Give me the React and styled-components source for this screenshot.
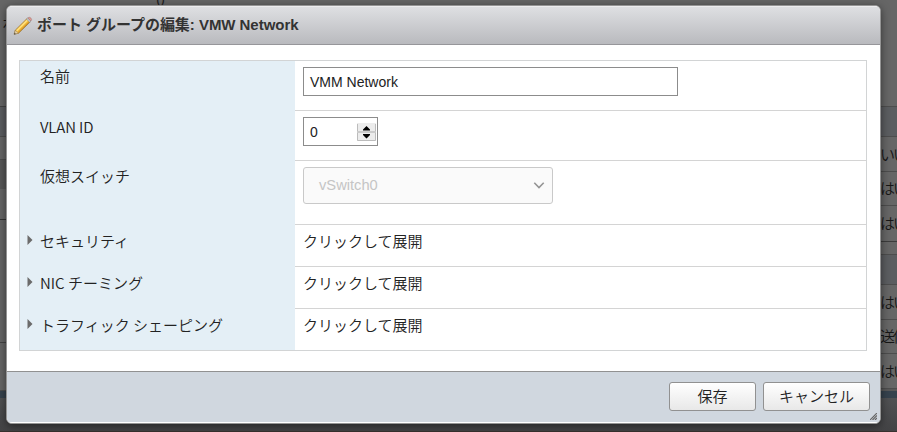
import React from "react";
import styled, { createGlobalStyle, css } from "styled-components";

const Global = createGlobalStyle`
  *, *::before, *::after { box-sizing: border-box; }
  body {
    margin: 0;
    overflow: hidden;
    color: #222;
    font: 350 15px/20px "Noto Sans CJK JP DemiLight", "Noto Sans CJK JP", sans-serif;
  }
`;

const Page = styled.div`
  position: relative;
  height: 432px;
  overflow: hidden;
  background: linear-gradient(#666 398px, #505153 398px, #434345 431px, #38322f 431px);
`;

const Backdrop = styled.div`
  display: flex;
  justify-content: space-between;
  height: 432px;
  color: #161616;
`;

const Strip = styled.div`
  width: ${(p) => p.$width}px;
  overflow: hidden;
`;

const fills = {
  plain: "#666",
  heading: "#5b5d60",
  dark: "#585858",
  blue: "#36424d",
};

const Band = styled.div`
  height: ${(p) => p.$height}px;
  line-height: ${(p) => p.$height - 2}px;
  letter-spacing: -2px;
  white-space: nowrap;
  background: ${(p) => fills[p.$fill || "plain"]};
  border-bottom: ${(p) => p.$rule || 0}px solid ${(p) => p.$ruleColor || "#4d4d4d"};
`;

const Lead = styled.div`
  height: 107px;
  padding: 13px 0 0 2px;
  border-bottom: 1px solid #444;
`;

const Caption = styled.span`
  position: absolute;
  top: -10px;
  left: 156px;
  font: 15px/17px "Liberation Sans", sans-serif;
  letter-spacing: -1px;
  color: #222;
`;

const Dialog = styled.section`
  position: absolute;
  top: 5px;
  left: 6px;
  width: 875px;
  height: 419px;
  display: flex;
  flex-direction: column;
  overflow: hidden;
  background: #fff;
  border: 1px solid #949494;
  border-radius: 6px;
  box-shadow: 0 2px 8px rgba(0, 0, 0, 0.5);
`;

const Header = styled.header`
  display: flex;
  align-items: center;
  gap: 4px;
  height: 39px;
  flex: none;
  padding: 0 0 0 6px;
  border-top: 1px solid #ececee;
  border-bottom: 1px solid #96969a;
  background: linear-gradient(#dedfe2, #b9babe);
`;

const Title = styled.h1`
  margin: 0;
  padding-bottom: 1px;
  font: 700 15px/20px "Liberation Sans", "Noto Sans CJK JP", sans-serif;
  letter-spacing: -0.04px;
  color: #333;
  white-space: nowrap;
`;

const Body = styled.div`
  flex: 1;
  padding: 15px 13px 0 12px;
`;

const Table = styled.div`
  border: 1px solid #d2d4d5;
`;

const Row = styled.div`
  display: grid;
  grid-template-columns: 275px 1fr;
  height: ${(p) => p.$height}px;
`;

const Label = styled.div`
  display: flex;
  align-items: flex-start;
  padding: ${(p) => p.$top}px 0 0 7px;
  letter-spacing: ${(p) => p.$tracking || 0}px;
  background: #e4eff6;
`;

const Marker = styled.span`
  width: 13px;
  height: 20px;
  display: flex;
  padding-top: 4px;
`;

const Value = styled.div`
  padding: ${(p) => p.$top}px 0 0 8px;
  border-bottom: ${(p) => (p.$last ? 0 : 1)}px solid #d4d4d4;
`;

const field = css`
  display: flex;
  align-items: center;
  font: 14px/20px "Liberation Sans", sans-serif;
  border: 1px solid #8c8c8c;
  height: 29px;
  padding-left: 6px;
  background: #fff;
`;

const TextField = styled.div`
  ${field}
  width: 375px;
`;

const NumberField = styled.div`
  ${field}
  justify-content: space-between;
  width: 75px;
  padding-right: 1px;
`;

const SelectField = styled.div`
  ${field}
  justify-content: space-between;
  width: 250px;
  height: 37px;
  padding: 0 7px 2px 15px;
  color: #c5c5c5;
  font-size: 14.7px;
  background: #fafafa;
  border-color: #c9c9c9;
  border-radius: 3px;
`;

const Footer = styled.footer`
  display: flex;
  justify-content: flex-end;
  gap: 7px;
  height: 52px;
  flex: none;
  padding: 10px 10px 0 0;
  background: #d0d7df;
  border-top: 1px solid #919191;
  border-bottom: 1px solid #fff;
`;

const Button = styled.button`
  width: ${(p) => p.$width}px;
  height: 29px;
  padding: 0 0 2px;
  font: inherit;
  color: #222;
  background: linear-gradient(#fff, #e8e8e8);
  border: 1px solid #919191;
  border-radius: 3px;
`;

const Grip = styled.span`
  position: absolute;
  right: 3px;
  bottom: 3px;
  width: 7px;
  height: 7px;
  display: flex;
`;

const Pencil = () => (
  <svg width="20" height="20" viewBox="0 0 20 20">
    <path d="M1.2 18.2 2.3 14.2 14 2.6 17.3 5.8 5.6 17.2Z" fill="#f0b536" stroke="#8d6a32" strokeWidth=".7" />
    <path d="M3.1 14.2 13.8 3.6 15 4.8 4.2 15.4Z" fill="#ffe07a" />
    <path d="M5.2 16.5 15.8 6.1" stroke="#c98a20" strokeWidth=".9" />
    <path d="M1.2 18.2 2.3 14.4 5.4 17.1Z" fill="#e6d0a4" stroke="#8d7a55" strokeWidth=".4" />
    <path d="M1 18.6 1.6 16.8 2.9 18Z" fill="#444" />
    <path d="M13.4 3.1 14.6 2 17.9 5.1 16.7 6.3Z" fill="#c3c8ce" stroke="#7f848b" strokeWidth=".4" />
    <path d="M14.8 1.9Q16.3.6 17.8 1.9 19.3 3.4 18 5Z" fill="#df9a94" stroke="#a0706c" strokeWidth=".5" />
  </svg>
);

const Triangle = () => (
  <svg width="6" height="10" viewBox="0 0 6 10">
    <path d="M.5 0 5.5 5 .5 10Z" fill="#6b6b6b" />
  </svg>
);

const Spinner = () => (
  <svg width="19" height="18" viewBox="0 0 19 18">
    <path d="M0 0H19V18H0Z" fill="#ececec" />
    <path d="M.5 1V8.5H18.5V1M.5 10V17.5H18.5V10" fill="none" stroke="#bcbcbc" />
    <path d="M0 8H19V10H0Z" fill="#cbcbcb" />
    <path d="M6 7.5V6.5L9.5 3 13 6.5V7.5ZM6 11H13V12L9.5 15.5 6 12Z" fill="#000" />
  </svg>
);

const Chevron = () => (
  <svg width="12" height="8" viewBox="0 0 12 8">
    <path d="M1.3 1.8 6 6.5 10.7 1.8" fill="none" stroke="#949494" strokeWidth="1.6" />
  </svg>
);

const sections = ["セキュリティ", "NIC チーミング", "トラフィック シェーピング"];

export default function App() {
  return (
    <>
      <Global />
      <Page>
        <Backdrop>
          <Strip $width={7}>
            <Lead>ホ</Lead>
            <Band $height={30} $fill="heading" $rule={1} />
            <Band $height={23} $rule={1} />
            <Band $height={29} $fill="dark" />
            <Band $height={31} $rule={1} $ruleColor="#333" />
            <Band $height={123} $rule={1} $ruleColor="#444" />
            <Band $height={48} $rule={1} />
            <Band $height={7} $fill="blue" />
          </Strip>
          <Strip $width={17}>
            <Band $height={107} $rule={1} />
            <Band $height={30} $fill="heading" $rule={1} />
            <Band $height={35} $rule={1}>いいえ</Band>
            <Band $height={34} $rule={1}>はい</Band>
            <Band $height={36} $rule={1} $ruleColor="#3c3c3c">はい</Band>
            <Band $height={13} $rule={1} />
            <Band $height={30} $fill="heading" $rule={1} />
            <Band $height={35} $rule={1}>はい</Band>
            <Band $height={34} $rule={1}>送信</Band>
            <Band $height={35} $rule={1}>はい</Band>
            <Band $height={2} $fill="dark" />
            <Band $height={7} $fill="blue" />
          </Strip>
        </Backdrop>
        <Caption>()</Caption>
        <Dialog>
          <Header>
            <Pencil />
            <Title>ポート グループの編集: VMW Network</Title>
          </Header>
          <Body>
            <Table>
              <Row $height={50}>
                <Label $top={5}><Marker />名前</Label>
                <Value $top={6}><TextField>VMM Network</TextField></Value>
              </Row>
              <Row $height={50}>
                <Label $top={6} $tracking={-0.15}><Marker />VLAN ID</Label>
                <Value $top={6}><NumberField>0<Spinner /></NumberField></Value>
              </Row>
              <Row $height={64}>
                <Label $top={5}><Marker />仮想スイッチ</Label>
                <Value $top={6}><SelectField>vSwitch0<Chevron /></SelectField></Value>
              </Row>
              {sections.map((name, i) => (
                <Row key={name} $height={i === 2 ? 41 : 42}>
                  <Label $top={6}><Marker><Triangle /></Marker>{name}</Label>
                  <Value $top={6} $last={i === 2}>クリックして展開</Value>
                </Row>
              ))}
            </Table>
          </Body>
          <Footer>
            <Button $width={87}>保存</Button>
            <Button $width={107}>キャンセル</Button>
          </Footer>
          <Grip>
            <svg width="7" height="7" viewBox="0 0 7 7">
              <path d="M0 7 7 0M2.5 7 7 2.5M5 7 7 5" stroke="#666" strokeWidth="1.2" />
            </svg>
          </Grip>
        </Dialog>
      </Page>
    </>
  );
}
